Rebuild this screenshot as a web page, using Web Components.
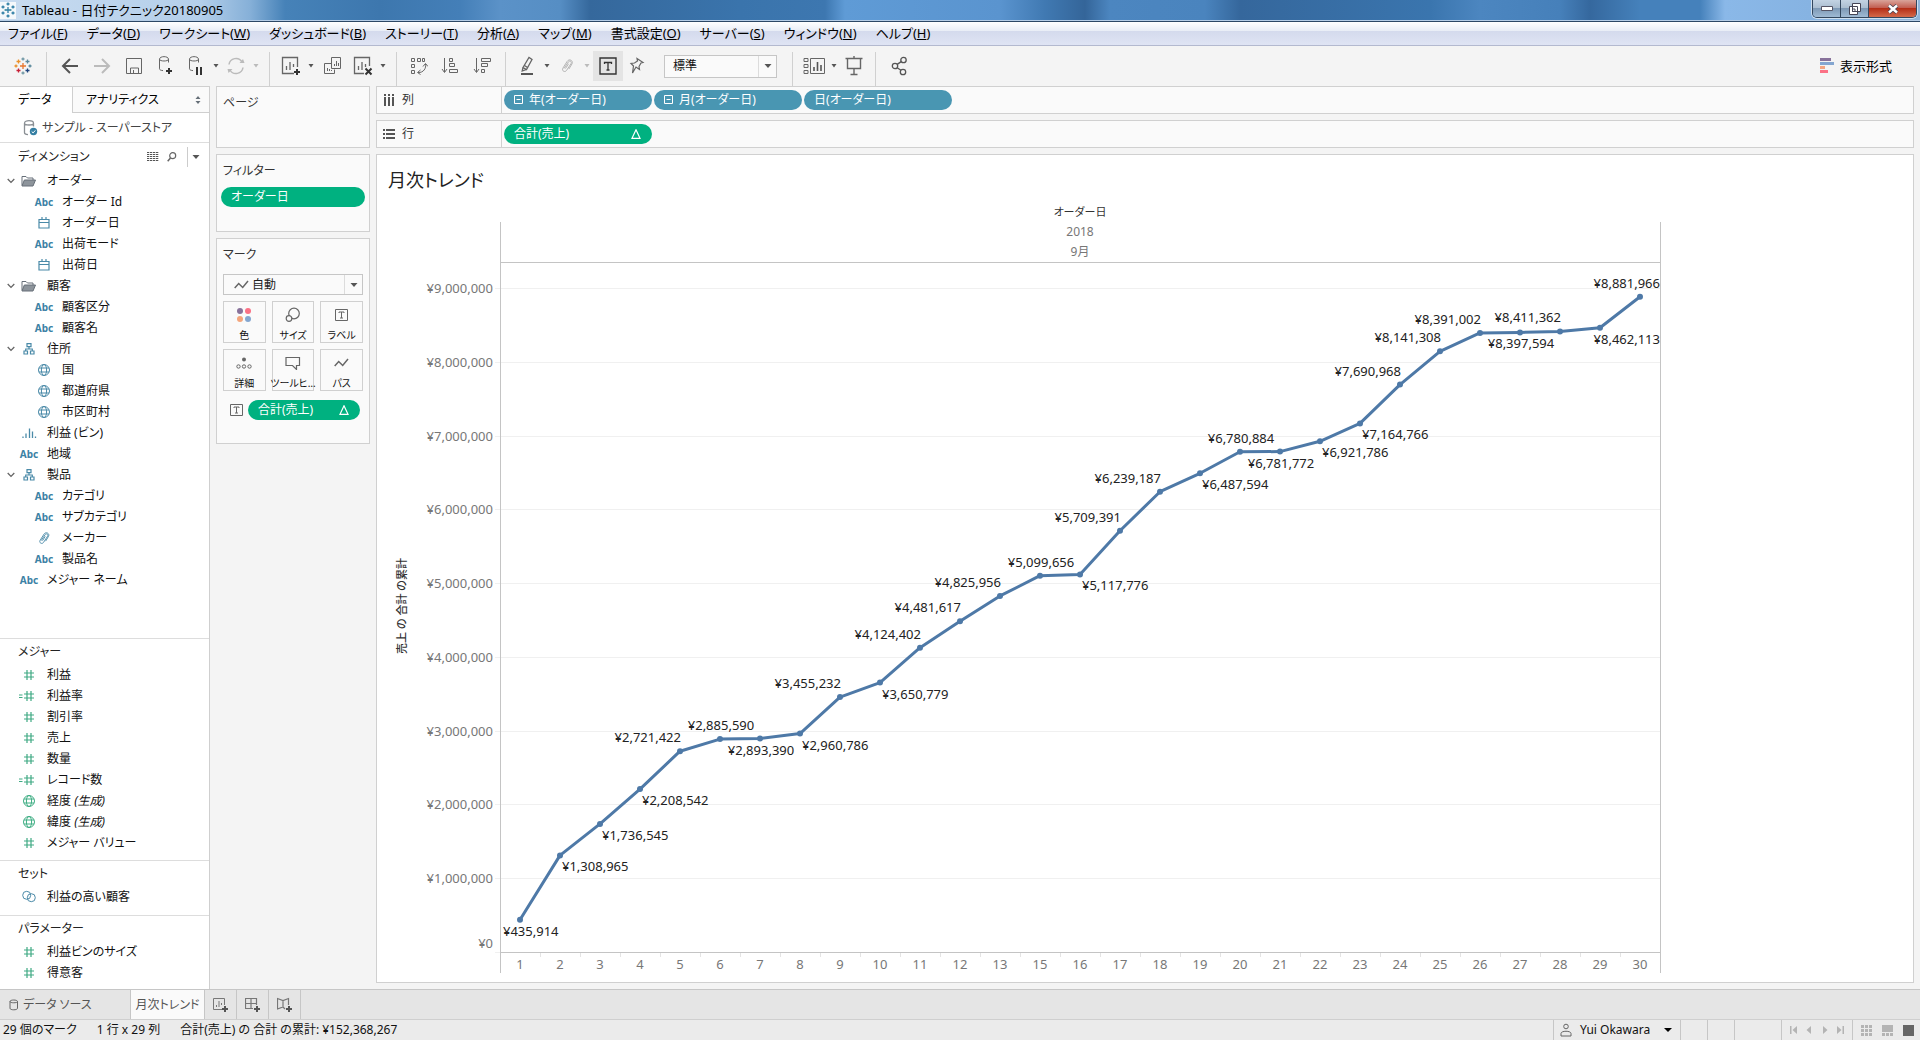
<!DOCTYPE html>
<html lang="ja">
<head>
<meta charset="utf-8">
<title>Tableau - 日付テクニック20180905</title>
<style>
html,body{margin:0;height:100%}
body{font-family:"Noto Sans","Noto Sans CJK JP",sans-serif;font-size:12px;line-height:16px;font-feature-settings:"palt";color:#111;background:#f4f4f4;overflow:hidden}
</style>
</head>
<body>
<workbook-app></workbook-app>
<script>
const RESET = `*{box-sizing:border-box}
button,select{font:inherit;font-feature-settings:inherit;color:inherit;margin:0;padding:0;border:0;background:none;border-radius:0;white-space:nowrap}
svg{display:block}ul{list-style:none;margin:0;padding:0}h1,h2{font:inherit;margin:0}`;

function define(name, css, render) {
  customElements.define(name, class extends HTMLElement {
    connectedCallback() {
      if (this.shadowRoot) return;
      const root = this.attachShadow({ mode: 'open' });
      const t = document.createElement('template');
      t.innerHTML = `<style>${RESET}${css}</style>${render(this)}`;
      root.append(t.content.cloneNode(true));
    }
  });
}
const attr = (el, n, d = '') => el.getAttribute(n) ?? d;

/* ---------- icons: [width, height, markup] ---------- */
const plusAt = (x, y, c = '#333') => `<path d="M${x - 3} ${y}h6M${x} ${y - 3}v6" stroke="${c}" stroke-width="2"/>`;
const cross = (x, y, r, c) => `<path d="M${x - r} ${y}h${2 * r}M${x} ${y - r}v${2 * r}" stroke="${c}" stroke-width="1.3"/>`;
const cyl = `<path d="M1.5 3.2c0-3.4 9-3.4 9 0v3.3M1.5 3.2c0 2.4 9 2.4 9 0M1.5 3.2v9.6c0 1 1.5 1.7 3.5 1.8"/>`;
const clip = `<path d="M4.5 10.5L8.8 4c1.4-1.8 3.8-.4 2.8 1.5L7 12.500c-1.600 2.200-5 .400-3.700-2.200L7.700 3.300C9.700.300 14 2.600 12.600 5.700L9.400 11M6 10.500l3-4.700"/>`;
const globe = `<circle cx="7" cy="7" r="5.500"/><ellipse cx="7" cy="7" rx="2.600" ry="5.500"/><path d="M2 5h10M2 9h10"/>`;
const arrowDown = `<path d="M3.500 1v14M1 12l2.500 3.500L6 12"/>`;
const ICONS = {
  app: [16, 16, ['8,8,3', '3,5,1.500', '3,11,1.500', '13,5,1.500', '13,11,1.500', '8,2,1.500', '8,14,1.500'].map(p => cross(...p.split(',').map(Number), '#2f7da5')).join('') + cross(5.5, 8, 1, '#59a') + cross(10.5, 8, 1, '#59a')],
  logo: [18, 18, cross(9, 9, 3, '#e8762d') + cross(4.500, 4.500, 2, '#eb9129') + cross(13.500, 4.500, 2, '#5b879b') + cross(4.500, 13.500, 2, '#c72037') + cross(13.500, 13.500, 2, '#1f457e') + cross(9, 2, 1.500, '#7199a6') + cross(9, 16, 1.500, '#7199a6') + cross(2, 9, 1.500, '#eb912c') + cross(16, 9, 1.500, '#59879b')],
  back: [18, 18, `<path d="M17 9H2M9 2L2 9l7 7" stroke="#555" stroke-width="2"/>`],
  fwd: [18, 18, `<path d="M1 9h15M9 2l7 7-7 7" stroke="#bbb" stroke-width="2"/>`],
  save: [18, 18, `<path d="M1.500 1.500h15v15h-15zM5.500 16v-5h8v5M8.500 16v-3" stroke="#666"/>`],
  dbplus: [16, 20, `<g stroke="#666">${cyl}</g>` + plusAt(11, 15)],
  dbpause: [16, 20, `<g stroke="#666">${cyl}</g><path d="M9 11v8M13 11v8" stroke="#333" stroke-width="2"/>`],
  refresh: [18, 18, `<path d="M2 7.500A7 7 0 0 1 15 5M16 10.500A7 7 0 0 1 3 13" stroke="#bbb" stroke-width="1.500"/><path d="M12.500 6h5l-1.500-4zM.500 12h5l-4 4z" fill="#bbb"/>`],
  chartplus: [20, 20, `<path d="M13 17.500H1.500v-16h15V11M5.500 14v-4M9 14V6M12.500 11V8" stroke="#666" stroke-width="1.300"/>` + plusAt(16, 16)],
  chartx: [20, 20, `<path d="M11 17.500H1.500v-16h15V10M5.500 14v-4M9 14V6M12.500 11V8" stroke="#666" stroke-width="1.300"/><path d="M12.500 12.500l6 6M18.500 12.500l-6 6" stroke="#333" stroke-width="2"/>`],
  dup: [18, 20, `<path d="M7 7.500H.500v10h10v-4M7.500 1.500h9v11h-9zM10.500 10V8M12.500 10V5M14.500 10V7M3.500 15v-3M5.500 15v-2M7.500 15v-1" stroke="#666"/>`],
  swap: [18, 18, `<path d="M1.500 1.500h3v3h-3zM7.500 1.500h3v3h-3zM12.500 1.500h2v3h-2zM1.500 7.500h3v3h-3zM1.500 13.500h3v3h-3zM15.500 7c1 4-2 9-7.500 8.500M13 9.500l2.500-3 2.500 3M10.500 13L7.500 15.500l3 2" stroke="#666"/>`],
  sortasc: [18, 18, `<g stroke="#666">${arrowDown}<path d="M8.500 1.500h3v3h-3zM8.500 6.500h5v3h-5zM8.500 12.500h8v3h-8z"/></g>`],
  sortdesc: [18, 18, `<g stroke="#666">${arrowDown}<path d="M8.500 1.500h9v3h-9zM8.500 6.500h6v3h-6zM8.500 12.500h3v3h-3z"/></g>`],
  pen: [16, 20, `<path d="M4 11.500L10 1.500l3 2L7.500 13.500zM4 11.500L3.200 15l4.300-1.500M5.500 9.500l3 2" stroke="#666" stroke-width="1.300"/><path d="M2 18h12" stroke="#555" stroke-width="2"/>`],
  clip: [16, 18, `<g stroke="#b4b4b4" transform="translate(.5 1)">${clip}</g>`],
  clipblue: [14, 14, `<g stroke="#4a8aa8" transform="scale(.92)">${clip}</g>`],
  tbox: [18, 18, `<path d="M1 1h16v16H1z" stroke="#333" stroke-width="1.400"/><path d="M5.500 7V5.500h7V7M9 5.500V13M7.500 13h3" stroke="#333" stroke-width="1.300"/>`],
  pin: [16, 18, `<path d="M8 1.500l6 4-2 .500-2 3.500.500 3-3.500-2.500L3.500 16l1-7L2 6.500l3.500-.500L8.500 4z" stroke="#666" stroke-width="1.200"/>`],
  cards: [22, 16, `<path d="M1 .500h4v3H1zM1 6.500h4v3H1zM1 12.500h4v3H1zM7.500.500h14v15h-14z" stroke="#666"/><path d="M11 13V9M14.500 13V4M18 13V7" stroke="#555" stroke-width="1.600"/>`],
  present: [18, 20, `<path d="M.500 2.500h17M2.500 3v9.500h13V3M9 0v2M9 12.500V18M5.500 18.500h7" stroke="#666" stroke-width="1.400"/>`],
  share: [16, 20, `<g stroke="#555" stroke-width="1.300"><circle cx="4" cy="10" r="2.700"/><circle cx="12.500" cy="4" r="2.700"/><circle cx="12" cy="16" r="2.700"/><path d="M6.200 8.400l4-2.800M6.200 11.800l3.700 2.500"/></g>`],
  showme: [14, 16, `<path fill="#88729b" d="M0 0h11v3H0z"/><path fill="#84a6d0" d="M0 4h14v3H0z"/><path fill="#f4a582" d="M0 8h5v3H0z"/><path fill="#fb7185" d="M0 12h8v3H0z"/>`],
  caret: [8, 6, `<path fill="#555" d="M1.500 1h5L4 4.500z"/>`],
  caretlight: [8, 6, `<path fill="#bbb" d="M1.500 1h5L4 4.500z"/>`],
  caretbig: [8, 6, `<path fill="#555" d="M.500 1h7L4 5z"/>`],
  caretblack: [8, 6, `<path fill="#000" d="M0 1h8L4 5z"/>`],
  updown: [6, 8, `<path fill="#666f78" d="M3 0l2.500 3h-5zM3 8l2.500-3h-5z"/>`],
  source: [15, 16, `<g stroke="#8a8f94" stroke-width="1.300">${cyl}</g><circle cx="10.500" cy="11.500" r="3.700" fill="#357fa3"/><path d="M8.700 11.500l1.400 1.400 2.200-2.500" stroke="#fff"/>`],
  cyl: [10, 12, `<path d="M1 2.500c0-2 7.500-2 7.500 0v6.800c0 2-7.500 2-7.500 0zM1 2.500c0 1.700 7.500 1.700 7.500 0" stroke="#666"/>`],
  list: [12, 10, [0, 2, 4, 6, 8].map(y => [0, 3, 6, 9].map(x => `<path fill="#555" d="M${x} ${y}h2.300v1H${x}z"/>`).join('')).join('')],
  search: [10, 10, `<circle cx="5.700" cy="3.700" r="3" stroke="#666" stroke-width="1.200"/><path d="M3.500 6L.700 9.200" stroke="#666" stroke-width="1.500"/>`],
  chevron: [8, 6, `<path d="M.700 1L4 4.400 7.300 1" stroke="#666" stroke-width="1.300"/>`],
  folder: [16, 12, `<path d="M1 10.500V1.500h4l1.500 1.500h5.500v2" stroke="#666f78"/><path d="M3.300 5H14.500l-2.500 6H1z" fill="#8d949b" stroke="#666f78"/>`],
  cal: [12, 12, `<path d="M1 2.500h10v8.500H1zM1 5.500h10M4 0v3M8 0v3" stroke="#4a8aa8" stroke-width="1.200"/>`],
  hier: [12, 12, `<path d="M4 .700h4v3H4zM1 8h3.500v3H1zM7.500 8H11v3H7.500zM6 4v2M2.700 8V6h6.600v2" stroke="#4a8aa8" stroke-width="1.200"/>`],
  globe: [14, 14, `<g stroke="#4a8aa8">${globe}</g>`],
  globegreen: [14, 14, `<g stroke="#3fae84">${globe}</g>`],
  bins: [15, 12, `<path d="M1 9.500v1.500M4 6.500V11M7.500 1.500V11M10.500 4.500V11M13.500 9.500v1.500" stroke="#4a8aa8" stroke-width="1.300"/>`],
  hash: [12, 12, `<path d="M4 1v10M8 1v10M1 4h10M1 8h10" stroke="#3fa983" stroke-width="1.200"/>`],
  calchash: [20, 12, `<path d="M8 1v10M12 1v10M5 4h10M5 8h10M0 5h3.500M0 7.500h3.500" stroke="#3fa983" stroke-width="1.200"/>`],
  set: [14, 14, `<g stroke="#4a8aa8"><circle cx="4.700" cy="5.300" r="4"/><circle cx="9.300" cy="7.700" r="4"/></g>`],
  cols: [12, 14, `<path fill="#555" d="M1 1h2v2H1zM5 1h2v2H5zM9 1h2v2H9zM1 4h2v9H1zM5 4h2v9H5zM9 4h2v9H9z"/>`],
  rows: [12, 12, `<path fill="#555" d="M0 1h2v2H0zM0 5h2v2H0zM0 9h2v2H0zM3 1h9v2H3zM3 5h9v2H3zM3 9h9v2H3z"/>`],
  minus: [10, 10, `<path d="M.500.500h8v8h-8zM2.500 4.500h4" stroke="#fff"/>`],
  delta: [10, 10, `<path d="M5 .800L9 9.300H1z" stroke="#fff" stroke-width="1.200"/>`],
  line: [15, 10, `<path d="M.700 8l4-4.500 4 4L14 1" stroke="#666" stroke-width="1.500"/>`],
  color: [16, 16, `<circle cx="4" cy="4" r="3" fill="#88729b"/><circle cx="12" cy="4" r="3" fill="#fb7185"/><circle cx="4" cy="12" r="3" fill="#f4a57c"/><circle cx="12" cy="12" r="3" fill="#84a6d0"/>`],
  size: [16, 16, `<circle cx="9" cy="6.500" r="5.300" stroke="#666" stroke-width="1.200"/><circle cx="4" cy="11.500" r="2.800" stroke="#666" stroke-width="1.200" fill="#fafafa"/>`],
  label: [14, 12, `<path d="M.500.500h12v11h-12z" stroke="#666"/><path d="M4 4V3h5v1M6.500 3v6M5 9h3" stroke="#666"/>`],
  detail: [16, 14, `<circle cx="8" cy="3.500" r="2" fill="#666"/><g stroke="#666"><circle cx="2.500" cy="10.500" r="1.700"/><circle cx="8" cy="10.500" r="1.700"/><circle cx="13.500" cy="10.500" r="1.700"/></g>`],
  tooltip: [16, 14, `<path d="M1 1.500h13.500v8h-3v4l-4-4H1z" stroke="#666" stroke-width="1.200"/>`],
  newsheet: [16, 16, `<path d="M9 12.500H.500V1.500h11V8M3.500 10V8M6 10V4M8.500 8V6" stroke="#777"/>` + plusAt(12, 12, '#555')],
  newdash: [16, 16, `<path d="M8 11.500H.500V1.500h11V8M6 1.500v10M.500 6.500h11" stroke="#777" stroke-width="1.200"/>` + plusAt(12, 12, '#555')],
  newstory: [16, 16, `<path d="M8 12L6 10 .500 12V1.500L6 3.500l5.500-2V8M6 3.500V10" stroke="#777" stroke-width="1.200"/>` + plusAt(12, 12, '#555')],
  user: [12, 14, `<circle cx="6" cy="3.500" r="2.300" stroke="#666"/><path d="M1 13V10.500C1 7.500 11 7.500 11 10.500V13z" stroke="#666"/>`],
  first: [8, 8, `<path fill="#b4b4b4" d="M0 0h1.500v8H0zM7 0v8L2.500 4z"/>`],
  prev: [8, 8, `<path fill="#b4b4b4" d="M6 0v8L1.500 4z"/>`],
  next: [8, 8, `<path fill="#b4b4b4" d="M2 0v8L6.500 4z"/>`],
  last: [8, 8, `<path fill="#b4b4b4" d="M6.500 0H8v8H6.500zM1 0v8l4.500-4z"/>`],
  tiles: [11, 11, [0, 4, 8].map(y => [0, 4, 8].map(x => `<path fill="#b4b4b4" d="M${x} ${y}h3v3H${x}z"/>`).join('')).join('')],
  film: [11, 11, `<path fill="#b4b4b4" d="M0 0h11v7H0zM0 8h3v3H0zM4 8h3v3H4zM8 8h3v3H8z"/>`],
  full: [11, 11, `<path fill="#666" d="M0 0h11v11H0z"/>`],
  wmin: [12, 6, `<path d="M.500.500h11v4h-11z" fill="#fff" stroke="#556"/>`],
  wmax: [12, 12, `<path d="M3.500.500h8v8h-8zM.500 3.500h8v8h-8z" fill="#fff" stroke="#445"/><path d="M3.500 6h2.500v2.500H3.500z" stroke="#445"/>`],
  wclose: [12, 10, `<path d="M2 1.500l8 7M10 1.500l-8 7" stroke="#445" stroke-width="4"/><path d="M2 1.500l8 7M10 1.500l-8 7" stroke="#fff" stroke-width="2.400"/>`]
};
define('ui-icon', `:host{display:block;flex:none}`, el => {
  const [w, h, body] = ICONS[attr(el, 'name')];
  return `<svg width="${w}" height="${h}" viewBox="0 0 ${w} ${h}" fill="none" aria-hidden="true">${body}</svg>`;
});
const icon = n => `<ui-icon name="${n}"></ui-icon>`;

/* ---------- window title bar ---------- */
define('title-bar', `:host{display:flex;height:22px;justify-content:space-between;border-bottom:1px solid #2c4866;box-shadow:inset 0 -1px #b5cde6;
background:linear-gradient(90deg,#c9dcf0 0,#b4cfea 200px,#86b0d8 250px,#4682b8 285px,#3d77ae 380px,#447fb8 460px,#5b92c8 500px,#568ec4 560px,#35689c 590px,#3a74ac 740px,#3d77b0 825px,#5f9bd6 845px,#5a94cf 1000px,#4079b2 1045px,#346599 1085px,#4c86c0 1110px,#4a84be 1205px,#35679c 1240px,#3a75ae 1430px,#4c86c0 1480px,#4680ba 1560px,#35689e 1590px,#4581bb 1640px,#4581bb 1700px,#8ab8e8 1725px,#86b3e2 1810px,#8fb5da 100%)}
.t{display:flex;align-items:center;gap:6px;height:20px;font-size:13px;color:#000}.i{background:#f4f8fb;padding:0 0 1px}
.w{display:flex;height:18px;margin-right:3px;border:1px solid #33475e;border-top:0;border-radius:0 0 5px 5px;overflow:hidden;box-shadow:0 0 0 1px #cfe0f0}
.w button{width:28px;display:grid;place-items:center;background:linear-gradient(#c3d3e3,#a9bccf 50%,#7e99b5 50%,#9fbad4);border-right:1px solid #33475e}
.w button.c{width:47px;border:0;background:linear-gradient(#d9a49a,#c0574a 50%,#b52f18 50%,#d3694a)}`,
() => `<div class="t"><span class="i">${icon('app')}</span><span>Tableau - 日付テクニック20180905</span></div>
<div class="w"><button aria-label="最小化">${icon('wmin')}</button><button aria-label="元に戻す">${icon('wmax')}</button><button class="c" aria-label="閉じる">${icon('wclose')}</button></div>`);

/* ---------- menu bar ---------- */
define('menu-bar', `:host{display:block;height:24px;border-bottom:1px solid #b3b9cf;background:linear-gradient(#fff,#e8edf6 9px,#d4daed 9px,#dfe4f4)}
nav{display:flex;gap:19px;padding:0 8px;height:23px;font-size:13px;color:#000}button{height:22px}`,
() => `<nav>${[['ファイル', 'F'], ['データ', 'D'], ['ワークシート', 'W'], ['ダッシュボード', 'B'], ['ストーリー', 'T'], ['分析', 'A'], ['マップ', 'M'], ['書式設定', 'O'], ['サーバー', 'S'], ['ウィンドウ', 'N'], ['ヘルプ', 'H']]
  .map(([t, k]) => `<button>${t}(<u>${k}</u>)</button>`).join('')}</nav>`);

/* ---------- toolbar ---------- */
define('tool-button', `:host{display:block;width:32px}:host([size=m]){width:30px}:host([size=s]){width:28px}:host([size=xs]){width:12px}
button{width:100%;height:30px;display:grid;place-items:center}:host([on]) button{background:#e4e4e4}`,
el => `<button aria-label="${attr(el, 'icon')}">${icon(attr(el, 'icon'))}</button>`);
const tool = (i, s = 'l', extra = '') => `<tool-button icon="${i}" size="${s}" ${extra}></tool-button>`;
define('pick-list', `:host{display:flex;align-items:center;border:1px solid #c6c6c6;background:#fafafa;position:relative}
select{appearance:none;flex:1;min-width:0;height:100%;padding-left:8px;outline:0}:host([icon]) select{padding-left:28px}
.i{position:absolute;left:10px;pointer-events:none}.c{border-left:1px solid #dcdcdc;width:18px;display:grid;place-items:center;position:absolute;right:0;height:100%;pointer-events:none}`,
el => `${el.hasAttribute('icon') ? `<span class="i">${icon(attr(el, 'icon'))}</span>` : ''}<select aria-label="${attr(el, 'label')}"><option>${attr(el, 'value')}</option></select><span class="c">${icon('caretbig')}</span>`);
define('tool-bar', `:host{display:flex;height:40px;align-items:center;padding:0 28px 0 7px;background:#f4f4f4}
i{width:1px;height:34px;align-self:flex-end;margin:0 7px;background:#d0d0d0}
pick-list{width:113px;height:23px;margin:0 8px 0 13px}
.show{margin-left:auto;display:flex;align-items:center;gap:6px;font-size:13px;color:#000}`,
() => tool('logo') + '<i></i>' + tool('back') + tool('fwd') + tool('save') + tool('dbplus') + tool('dbpause', 's') + tool('caret', 'xs') + tool('refresh', 's') + tool('caretlight', 'xs')
  + '<i></i>' + tool('chartplus', 's') + tool('caret', 'xs') + tool('dup') + tool('chartx', 's') + tool('caret', 'xs')
  + '<i></i>' + tool('swap', 'm') + tool('sortasc') + tool('sortdesc')
  + '<i></i>' + tool('pen', 's') + tool('caret', 'xs') + tool('clip', 's') + tool('caretlight', 'xs') + tool('tbox', 'm', 'on') + tool('pin', 's')
  + '<pick-list label="表示サイズ" value="標準"></pick-list><i></i>' + tool('cards', 's') + tool('caret', 'xs') + tool('present', 's') + '<i></i>' + tool('share')
  + `<button class="show">${icon('showme')}<span>表示形式</span></button>`);

/* ---------- data pane ---------- */
define('field-row', `:host{display:flex;align-items:center;height:21px;padding-left:7px;white-space:nowrap}
.ch{width:9px;flex:none}.ic{width:26px;margin-right:5px;flex:none;display:flex;justify-content:center}
:host([level="2"]){padding-left:22px}
.abc{font:700 10px/16px "Noto Sans",sans-serif;color:#3c82a5}i{font-style:italic}`,
el => `<span class="ch">${el.hasAttribute('open') ? icon('chevron') : ''}</span><span class="ic">${attr(el, 'icon') === 'abc' ? '<span class="abc">Abc</span>' : icon(attr(el, 'icon'))}</span><span><slot></slot></span>`);
const row = ([l, i, t, o]) => `<field-row role="treeitem" level="${l}" icon="${i}" ${o ? 'open' : ''}>${t}</field-row>`;
const DIMS = [[1, 'folder', 'オーダー', 1], [2, 'abc', 'オーダー Id'], [2, 'cal', 'オーダー日'], [2, 'abc', '出荷モード'], [2, 'cal', '出荷日'], [1, 'folder', '顧客', 1], [2, 'abc', '顧客区分'], [2, 'abc', '顧客名'],
  [1, 'hier', '住所', 1], [2, 'globe', '国'], [2, 'globe', '都道府県'], [2, 'globe', '市区町村'], [1, 'bins', '利益 (ビン)'], [1, 'abc', '地域'], [1, 'hier', '製品', 1], [2, 'abc', 'カテゴリ'], [2, 'abc', 'サブカテゴリ'], [2, 'clipblue', 'メーカー'], [2, 'abc', '製品名'], [1, 'abc', 'メジャー ネーム']];
const MEAS = [[1, 'hash', '利益'], [1, 'calchash', '利益率'], [1, 'hash', '割引率'], [1, 'hash', '売上'], [1, 'hash', '数量'], [1, 'calchash', 'レコード数'], [1, 'globegreen', '経度 <i>(生成)</i>'], [1, 'globegreen', '緯度 <i>(生成)</i>'], [1, 'hash', 'メジャー バリュー']];
define('data-pane', `:host{display:flex;flex-direction:column;background:#fff;border-right:1px solid #cfcfcf;border-top:1px solid #cfcfcf}
.tabs{display:flex;height:26px;color:#000}.tabs button{text-align:left}
.tabs .a{width:72px;padding-left:18px}.tabs .b{flex:1;display:flex;align-items:center;justify-content:space-between;background:#fafafa;border-left:1px solid #cfcfcf;border-bottom:1px solid #cfcfcf;padding:0 8px 0 13px}
.src{display:flex;align-items:center;gap:4px;height:30px;padding-left:23px;color:#444;border-bottom:1px solid #ddd}
.head{display:flex;align-items:center;height:27px;padding:0 6px 0 18px;color:#222}
.head button{height:20px;display:grid;place-items:center}.head .l{margin-left:auto;width:20px}.head .s{width:18px;margin-right:6px}.head .m{width:16px;border-left:1px solid #ccc}
h2{padding-left:18px;height:25px;line-height:26px;color:#222}
section{border-top:1px solid #ddd;padding-bottom:8px}section:first-of-type{border:0;flex:1}section:nth-of-type(2){padding-bottom:7px}section:last-of-type{padding-bottom:6px}`,
() => `<div class="tabs"><button class="a">データ</button><button class="b"><span>アナリティクス</span>${icon('updown')}</button></div>
<div class="src">${icon('source')}<span>サンプル - スーパーストア</span></div>
<section role="tree" aria-label="ディメンション"><div class="head"><span>ディメンション</span><button class="l" aria-label="リスト表示">${icon('list')}</button><button class="s" aria-label="検索">${icon('search')}</button><button class="m" aria-label="メニュー">${icon('caretbig')}</button></div>${DIMS.map(row).join('')}</section>
<section role="tree" aria-label="メジャー"><h2>メジャー</h2>${MEAS.map(row).join('')}</section>
<section><h2>セット</h2>${row([1, 'set', '利益の高い顧客'])}</section>
<section><h2>パラメーター</h2>${row([1, 'hash', '利益ビンのサイズ'])}${row([1, 'hash', '得意客'])}</section>`);

/* ---------- cards ---------- */
define('field-pill', `:host{display:block;width:148px}button{width:100%;height:20px;border-radius:10px;background:#4996b2;color:#fff;display:flex;align-items:center;padding:0 11px 0 10px;gap:5px}
:host([green]) button{background:#00b180}.d{margin-left:auto}`,
el => `<button>${el.hasAttribute('expand') ? icon('minus') : ''}<span><slot></slot></span>${el.hasAttribute('delta') ? `<span class="d">${icon('delta')}</span>` : ''}</button>`);
define('side-card', `:host{display:block;border:1px solid #d0d0d0;background:#fafafa;color:#333}h2{padding:8px 6px 0;height:32px}`,
el => `<h2>${attr(el, 'title-text')}</h2><slot></slot>`);
define('mark-button', `:host{display:block;min-width:0}button{width:100%;height:42px;border:1px solid #d0d0d0;display:flex;flex-direction:column;align-items:center;justify-content:space-between;font-size:10px;line-height:14px;color:#111}
.i{height:28px;display:grid;place-items:center}`,
el => `<button><span class="i">${icon(attr(el, 'icon'))}</span><span><slot></slot></span></button>`);
define('cards-column', `:host{display:flex;flex-direction:column;gap:6px}
.p{height:62px}.f{height:78px}.m{height:206px}.f field-pill{width:auto;margin:0 4px}
.body{padding:3px 6px 0;display:flex;flex-direction:column;gap:6px}pick-list{height:21px;color:#222}
.g{display:grid;grid-template-columns:repeat(3,minmax(0,1fr));gap:6px}.t{display:flex;align-items:center;gap:4px;padding:3px 3px 0 7px}.t field-pill{flex:1;min-width:0}`,
() => `<side-card class="p" title-text="ページ"></side-card>
<side-card class="f" title-text="フィルター"><field-pill green>オーダー日</field-pill></side-card>
<side-card class="m" title-text="マーク"><div class="body"><pick-list icon="line" label="マーク タイプ" value="自動"></pick-list>
<div class="g">${[['color', '色'], ['size', 'サイズ'], ['label', 'ラベル'], ['detail', '詳細'], ['tooltip', 'ツールヒ…'], ['line', 'パス']].map(([i, t]) => `<mark-button icon="${i}">${t}</mark-button>`).join('')}</div>
<div class="t">${icon('label')}<field-pill green delta>合計(売上)</field-pill></div></div></side-card>`);

/* ---------- shelves ---------- */
define('field-shelf', `:host{display:flex;height:28px;border:1px solid #d0d0d0;background:#fafafa;color:#333}
.n{width:125px;display:flex;align-items:center;gap:7px;padding-left:6px;border-right:1px solid #d0d0d0}.f{display:flex;align-items:center;gap:2px;padding-left:2px}`,
el => `<div class="n">${icon(attr(el, 'icon'))}<span>${attr(el, 'name')}</span></div><div class="f"><slot></slot></div>`);

/* ---------- running total line chart ---------- */
const DATA = [[1, 435914, 'b<'], [2, 1308965, 'b'], [3, 1736545, 'b'], [4, 2208542, 'b'], [5, 2721422, 'a'], [6, 2885590, 'ac'], [7, 2893390, 'bc'], [8, 2960786, 'b'], [9, 3455232, 'a'], [10, 3650779, 'b'],
  [11, 4124402, 'a'], [12, 4481617, 'a'], [13, 4825956, 'a'], [15, 5099656, 'ac'], [16, 5117776, 'b'], [17, 5709391, 'a'], [18, 6239187, 'a'], [19, 6487594, 'b'], [20, 6780884, 'ac'], [21, 6781772, 'bc'],
  [22, 6921786, 'b'], [23, 7164766, 'b'], [24, 7690968, 'a'], [25, 8141308, 'a'], [26, 8391002, 'a'], [27, 8397594, 'bc'], [28, 8411362, 'a'], [29, 8462113, 'b>'], [30, 8881966, 'a>']];
define('trend-chart', `:host{display:block}text{font-size:13px;fill:#777}.v{fill:#222}.h{font-size:11px;fill:#333}.y{font-weight:500}.s{font-size:12px}`, () => {
  const L = 123, STEP = 40, BASE = 752, UNIT = 73.78, TOP = 22, HEAD = 62, END = 773;
  const R = L + STEP * DATA.length;
  const yen = n => '¥' + n.toLocaleString('en-US');
  const px = i => L + STEP * (i + 0.5), py = v => BASE - v / 1e6 * UNIT;
  let s = '';
  for (let m = 0; m <= 9; m++) {
    const y = Math.round(py(m * 1e6)) + .5;
    s += `<path d="M${L - 5} ${y}H${R}" stroke="#f0f0f0"/><text x="${L - 7}" y="${m ? y + 4 : y - 5}" text-anchor="end">${yen(m * 1e6)}</text>`;
  }
  s += `<path d="M${L}.5 ${TOP}V${END}M${R}.5 ${TOP}V${END}M${L} ${HEAD}.5H${R}M${L} ${BASE}.5H${R}" stroke="#c4c4c4"/>`;
  DATA.forEach(([d], i) => {
    if (i) s += `<path d="M${L + STEP * i}.5 ${BASE + 1}v4" stroke="#e4e4e4"/>`;
    s += `<text x="${px(i)}" y="769" text-anchor="middle">${d}</text>`;
  });
  s += `<polyline points="${DATA.map(([, v], i) => `${px(i)},${py(v).toFixed(1)}`).join(' ')}" stroke="#4e79a7" stroke-width="3" stroke-linejoin="round"/>`;
  DATA.forEach(([, v, p], i) => {
    const x = px(i), y = py(v), above = p[0] === 'a';
    let lx = above ? x + 1 : x + 2, anchor = above ? 'end' : 'start';
    if (p[1] === 'c') { lx = x + 1; anchor = 'middle'; }
    if (p[1] === '<') lx = L + 3;
    if (p[1] === '>') { lx = R; anchor = 'end'; }
    s += `<circle cx="${x}" cy="${y.toFixed(1)}" r="3" fill="#4e79a7"/><text class="v" x="${lx}" y="${Math.round(above ? y - 9 : y + 16)}" text-anchor="${anchor}">${yen(v)}</text>`;
  });
  const cx = (L + R) / 2;
  s += `<text class="h" x="${cx}" y="16" text-anchor="middle">オーダー日</text><text x="${cx}" y="36" text-anchor="middle" class="s">2018</text><text x="${cx}" y="56" text-anchor="middle" class="s">9月</text>
<text class="h y" transform="translate(29 406) rotate(-90)" text-anchor="middle">売上 の 合計 の累計</text>`;
  return `<svg width="${R + 1}" height="780" fill="none" role="img" aria-label="月次トレンド">${s}</svg>`;
});
define('sheet-view', `:host{display:block;border:1px solid #d0d0d0;background:#fff;overflow:hidden}h1{height:45px;padding:12px 11px 0;font-size:18px;line-height:26px;color:#222}`,
() => `<h1>月次トレンド</h1><trend-chart></trend-chart>`);

/* ---------- bottom bars ---------- */
define('sheet-tabs', `:host{display:flex;height:31px;background:#e5e5e5;border-top:1px solid #c6c6c6;border-bottom:1px solid #cfcfcf;color:#555}
button{border-right:1px solid #c6c6c6;display:flex;align-items:center;justify-content:center}.d{width:131px;justify-content:flex-start;gap:4px;padding-left:9px}.on{width:74px;background:#fafafa}.n{width:32px}`,
() => `<button class="d">${icon('cyl')}<span>データ ソース</span></button><button class="on">月次トレンド</button>
<button class="n" aria-label="新しいワークシート">${icon('newsheet')}</button><button class="n" aria-label="新しいダッシュボード">${icon('newdash')}</button><button class="n" aria-label="新しいストーリー">${icon('newstory')}</button>`);
define('status-bar', `:host{display:flex;height:20px;background:#ebebeb;color:#111;align-items:center;padding-left:3px;gap:20px}
.r{margin-left:auto;display:flex;height:20px}.r>*{border-left:1px solid #c6c6c6;display:flex;align-items:center}
.u{width:127px;padding:0 8px 0 6px;gap:8px}.u ui-icon:last-child{margin-left:auto}.e{width:27px}.x{width:47px}.v{width:71px;justify-content:space-evenly}.g{width:68px;justify-content:space-between;padding:0 6px 0 8px}.v button,.g button{height:20px;display:grid;place-items:center}`,
() => `<span>29 個のマーク</span><span>1 行 x 29 列</span><span>合計(売上) の 合計 の累計: ¥152,368,267</span>
<div class="r"><button class="u">${icon('user')}<span>Yui Okawara</span>${icon('caretblack')}</button><span class="e"></span><span class="e"></span><span class="x"></span>
<div class="v">${['first', 'prev', 'next', 'last'].map(i => `<button aria-label="${i}">${icon(i)}</button>`).join('')}</div>
<div class="g">${['tiles', 'film', 'full'].map(i => `<button aria-label="${i}">${icon(i)}</button>`).join('')}</div></div>`);

define('workbook-app', `:host{display:flex;flex-direction:column;height:100vh}
main{flex:1;min-height:0;display:flex;gap:6px;padding-right:6px}
data-pane{width:210px}cards-column{width:154px}
.c{flex:1;min-width:0;display:flex;flex-direction:column;gap:6px;padding-bottom:6px}sheet-view{flex:1;min-height:0}`,
() => `<title-bar></title-bar><menu-bar></menu-bar><tool-bar></tool-bar>
<main><data-pane></data-pane><cards-column></cards-column><div class="c">
<field-shelf icon="cols" name="列"><field-pill expand>年(オーダー日)</field-pill><field-pill expand>月(オーダー日)</field-pill><field-pill>日(オーダー日)</field-pill></field-shelf>
<field-shelf icon="rows" name="行"><field-pill green delta>合計(売上)</field-pill></field-shelf>
<sheet-view></sheet-view></div></main>
<sheet-tabs></sheet-tabs><status-bar></status-bar>`);
</script>
</body>
</html>
